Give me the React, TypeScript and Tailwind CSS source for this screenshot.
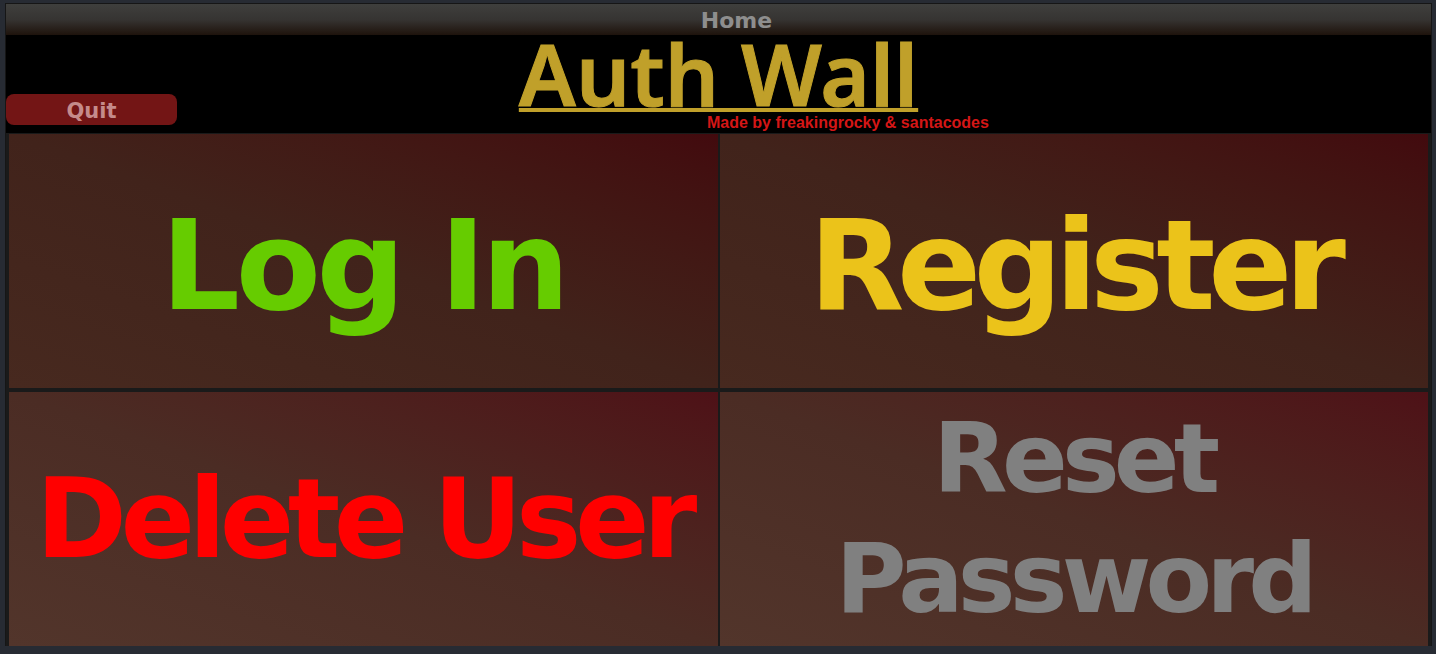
import React from 'react';

interface Tile {
    label: string[];
    color: string;
    size: string;
    bg: string;
}

const tiles: Tile[] = [
    {
        label: ['Log In'],
        color: 'text-[#66cc00]',
        size: 'text-[124px] leading-[124px] tracking-[-0.035em] pt-[10px]',
        bg: 'from-[#47291f] via-[#41231b] to-[#420a0e]',
    },
    {
        label: ['Register'],
        color: 'text-[#ebc31a]',
        size: 'text-[124px] leading-[124px] tracking-[-0.06em] pt-[10px]',
        bg: 'from-[#47291f] via-[#41231b] to-[#420a0e]',
    },
    {
        label: ['Delete User'],
        color: 'text-[#ff0000]',
        size: 'text-[110px] leading-[110px] tracking-[-0.06em]',
        bg: 'from-[#52352b] via-[#4b2c24] to-[#4e1117]',
    },
    {
        label: ['Reset', 'Password'],
        color: 'text-[#808080]',
        size: 'text-[97px] leading-[120px] tracking-[-0.06em]',
        bg: 'from-[#52352b] via-[#4b2c24] to-[#4e1117]',
    },
];

const App: React.FC = () => {
    return (
        <div className="h-[654px] w-[1436px] overflow-hidden bg-[#272b33] pt-[3px] pl-[5px]">
            {/* Window */}
            <div className="flex w-[1427px] flex-col border border-b-0 border-[#161616]">
                {/* Title bar */}
                <div className="flex h-[31px] items-center justify-center bg-linear-to-b from-[#3f3f3d] via-[#363432] to-[#1e130c] pl-[36px] pt-[3px]">
                    <span className="font-['DejaVu_Sans',sans-serif] text-[22px] font-bold leading-none text-[#8e8e8e]">
                        Home
                    </span>
                </div>

                {/* Header */}
                <div className="grid h-[98px] bg-black">
                    <div className="col-start-1 row-start-1 flex flex-col">
                        <div className="-mt-[4px] flex justify-center">
                            <h1 className="font-['Noto_Sans',sans-serif] text-[85px] font-semibold leading-none text-[#c0a02a] underline decoration-[4px] underline-offset-[2px] [-webkit-text-stroke:1px_#c0a02a]">
                                Auth Wall
                            </h1>
                        </div>
                        <p className="-mt-[1px] pl-[701px] font-['Liberation_Sans',Arial,sans-serif] text-[16px] font-bold leading-none whitespace-nowrap text-[#d41616]">
                            Made by freakingrocky &amp; santacodes
                        </p>
                    </div>
                    <button className="col-start-1 row-start-1 mb-[8px] flex h-[31px] w-[171px] items-center justify-center self-end justify-self-start rounded-lg bg-[#731515] pt-[3px] font-['DejaVu_Sans',sans-serif] text-[21px] font-bold leading-none text-[#c58b8b]">
                        Quit
                    </button>
                </div>

                {/* Options grid */}
                <div className="grid h-[513px] grid-cols-2 grid-rows-2 gap-x-[2px] gap-y-[4px] bg-[#1a1a1a] px-[3px] pt-[1px]">
                    {tiles.map((tile) => (
                        <button
                            key={tile.label.join(' ')}
                            className={`flex flex-col items-center justify-center bg-linear-to-tr ${tile.bg}`}
                        >
                            {tile.label.map((line) => (
                                <span
                                    key={line}
                                    className={`font-['DejaVu_Sans',sans-serif] font-bold whitespace-nowrap ${tile.size} ${tile.color}`}
                                >
                                    {line}
                                </span>
                            ))}
                        </button>
                    ))}
                </div>
            </div>
        </div>
    );
};

export default App;
